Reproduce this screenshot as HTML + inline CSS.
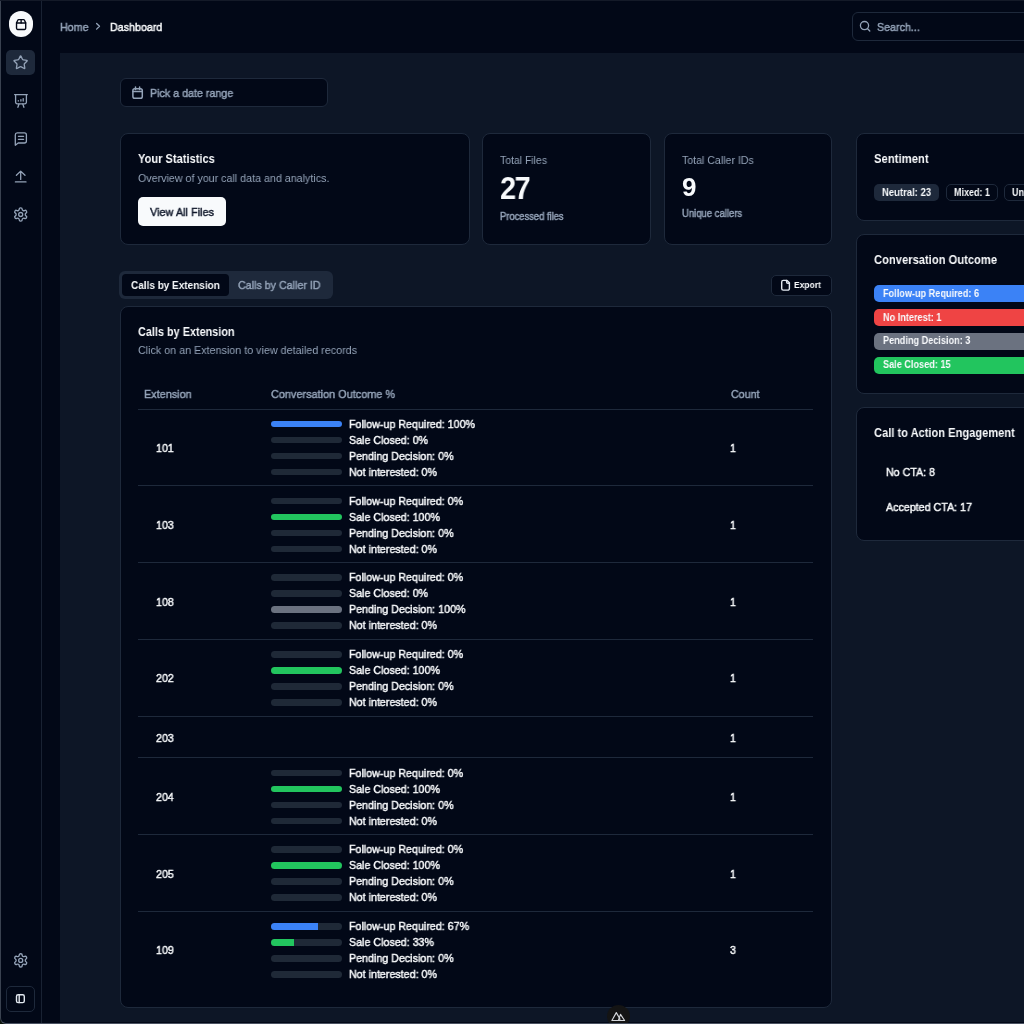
<!DOCTYPE html>
<html><head><meta charset="utf-8"><style>
html,body{margin:0;padding:0;width:1024px;height:1024px;overflow:hidden;background:#020817;}
body{position:relative;font-family:"Liberation Sans", sans-serif;}
.t{position:absolute;white-space:nowrap;will-change:transform;}
.r{position:absolute;}
svg{position:absolute;left:0;top:0;}
</style></head><body>
<div class="r" style="left:0px;top:0px;width:1024px;height:1024px;background:#020817;border-radius:0px;"></div>
<div class="r" style="left:42px;top:53px;width:982px;height:969px;background:#0d1626;border-radius:0px;"></div>
<div class="r" style="left:42px;top:53px;width:18px;height:969px;background:#020817;border-radius:0px;"></div>
<div class="r" style="left:41px;top:0px;width:1px;height:1024px;background:#192233;border-radius:0px;"></div>
<div class="r" style="left:0px;top:0px;width:1px;height:1024px;background:#3a4250;border-radius:0px;"></div>
<div class="r" style="left:0px;top:0px;width:1024px;height:1px;background:#141a28;border-radius:0px;"></div>
<div class="r" style="left:8.8px;top:11.4px;width:24.2px;height:25.6px;background:#f8fafc;border-radius:13px;"></div>
<div class="r" style="left:6px;top:50px;width:29px;height:25px;background:#1e293b;border-radius:5px;"></div>
<div class="r" style="left:6px;top:986px;width:29px;height:26px;background:transparent;border:1px solid #1e293b;box-sizing:border-box;border-radius:5px;"></div>
<div class="t" style="left:59.50px;top:20.54px;font-size:11.56px;line-height:12.91px;color:#94a3b8;font-weight:400;letter-spacing:0.00px;-webkit-text-stroke:0.45px #94a3b8;transform:scaleX(0.9259);transform-origin:0 0;">Home</div>
<div class="t" style="left:110.00px;top:20.54px;font-size:11.56px;line-height:12.91px;color:#f8fafc;font-weight:400;letter-spacing:0.00px;-webkit-text-stroke:0.45px #f8fafc;transform:scaleX(0.9259);transform-origin:0 0;">Dashboard</div>
<div class="r" style="left:852px;top:12px;width:200px;height:29px;background:#020817;border:1px solid #1e293b;box-sizing:border-box;border-radius:6px;"></div>
<div class="t" style="left:876.80px;top:20.54px;font-size:11.56px;line-height:12.91px;color:#94a3b8;font-weight:400;letter-spacing:0.00px;-webkit-text-stroke:0.45px #94a3b8;transform:scaleX(0.9259);transform-origin:0 0;">Search...</div>
<div class="r" style="left:119.5px;top:78px;width:208px;height:28.5px;background:#020817;border:1px solid #1e293b;box-sizing:border-box;border-radius:6px;"></div>
<div class="t" style="left:149.80px;top:87.34px;font-size:11.56px;line-height:12.91px;color:#94a3b8;font-weight:400;letter-spacing:0.00px;-webkit-text-stroke:0.45px #94a3b8;transform:scaleX(0.9259);transform-origin:0 0;">Pick a date range</div>
<div class="r" style="left:119.5px;top:132.5px;width:350px;height:112.5px;background:#020817;border:1px solid #1e293b;box-sizing:border-box;border-radius:8px;"></div>
<div class="t" style="left:138.00px;top:151.75px;font-size:12.65px;line-height:14.13px;color:#f8fafc;font-weight:700;letter-spacing:0.00px;transform:scaleX(0.8772);transform-origin:0 0;">Your Statistics</div>
<div class="t" style="left:138.00px;top:171.64px;font-size:11.56px;line-height:12.91px;color:#94a3b8;font-weight:400;letter-spacing:0.00px;transform:scaleX(0.9259);transform-origin:0 0;">Overview of your call data and analytics.</div>
<div class="r" style="left:137.5px;top:197px;width:88px;height:28.5px;background:#f8fafc;border-radius:5px;"></div>
<div class="t" style="left:150.00px;top:204.95px;font-size:11.77px;line-height:13.15px;color:#0f172a;font-weight:400;letter-spacing:0.00px;-webkit-text-stroke:0.45px #0f172a;transform:scaleX(0.9259);transform-origin:0 0;">View All Files</div>
<div class="r" style="left:481.5px;top:132.5px;width:169px;height:112.5px;background:#020817;border:1px solid #1e293b;box-sizing:border-box;border-radius:8px;"></div>
<div class="t" style="left:500.40px;top:153.89px;font-size:11.29px;line-height:12.61px;color:#94a3b8;font-weight:400;letter-spacing:0.00px;transform:scaleX(0.9259);transform-origin:0 0;">Total Files</div>
<div class="t" style="left:500.40px;top:171.03px;font-size:31.90px;line-height:35.63px;color:#f8fafc;font-weight:700;letter-spacing:-1.76px;transform:scaleX(0.9091);transform-origin:0 0;">27</div>
<div class="t" style="left:500.40px;top:211.11px;font-size:10.15px;line-height:11.34px;color:#94a3b8;font-weight:400;letter-spacing:0.00px;-webkit-text-stroke:0.45px #94a3b8;transform:scaleX(0.9259);transform-origin:0 0;">Processed files</div>
<div class="r" style="left:663.5px;top:132.5px;width:168px;height:112.5px;background:#020817;border:1px solid #1e293b;box-sizing:border-box;border-radius:8px;"></div>
<div class="t" style="left:681.50px;top:153.74px;font-size:11.45px;line-height:12.79px;color:#94a3b8;font-weight:400;letter-spacing:0.00px;transform:scaleX(0.9259);transform-origin:0 0;">Total Caller IDs</div>
<div class="t" style="left:681.50px;top:172.57px;font-size:26.00px;line-height:29.04px;color:#f8fafc;font-weight:700;letter-spacing:0.00px;">9</div>
<div class="t" style="left:681.50px;top:208.21px;font-size:10.26px;line-height:11.46px;color:#94a3b8;font-weight:400;letter-spacing:0.00px;-webkit-text-stroke:0.45px #94a3b8;transform:scaleX(0.9259);transform-origin:0 0;">Unique callers</div>
<div class="r" style="left:855.5px;top:132.5px;width:200px;height:88px;background:#020817;border:1px solid #1e293b;box-sizing:border-box;border-radius:8px;"></div>
<div class="t" style="left:874.30px;top:151.54px;font-size:12.88px;line-height:14.39px;color:#f8fafc;font-weight:700;letter-spacing:0.00px;transform:scaleX(0.8772);transform-origin:0 0;">Sentiment</div>
<div class="r" style="left:874px;top:184px;width:65px;height:16.5px;background:#1e293b;border-radius:5px;"></div>
<div class="t" style="left:882.30px;top:186.20px;font-size:10.83px;line-height:12.10px;color:#f8fafc;font-weight:700;letter-spacing:0.00px;transform:scaleX(0.8772);transform-origin:0 0;">Neutral: 23</div>
<div class="r" style="left:945.5px;top:184px;width:52px;height:16.5px;background:transparent;border:1px solid #1e293b;box-sizing:border-box;border-radius:5px;"></div>
<div class="t" style="left:953.70px;top:186.71px;font-size:10.26px;line-height:11.46px;color:#f8fafc;font-weight:700;letter-spacing:0.00px;transform:scaleX(0.8772);transform-origin:0 0;">Mixed: 1</div>
<div class="r" style="left:1003.8px;top:184px;width:60px;height:16.5px;background:transparent;border:1px solid #1e293b;box-sizing:border-box;border-radius:5px;"></div>
<div class="t" style="left:1011.50px;top:186.71px;font-size:10.26px;line-height:11.46px;color:#f8fafc;font-weight:700;letter-spacing:0.00px;transform:scaleX(0.8772);transform-origin:0 0;">Unknown: 1</div>
<div class="r" style="left:855.5px;top:233.5px;width:200px;height:160px;background:#020817;border:1px solid #1e293b;box-sizing:border-box;border-radius:8px;"></div>
<div class="t" style="left:874.40px;top:253.17px;font-size:12.75px;line-height:14.24px;color:#f8fafc;font-weight:700;letter-spacing:0.00px;transform:scaleX(0.8772);transform-origin:0 0;">Conversation Outcome</div>
<div class="r" style="left:874px;top:285.2px;width:170px;height:17px;background:#3b82f6;border-radius:5px;"></div>
<div class="t" style="left:882.50px;top:287.76px;font-size:10.43px;line-height:11.65px;color:#f8fafc;font-weight:700;letter-spacing:0.00px;transform:scaleX(0.8772);transform-origin:0 0;">Follow-up Required: 6</div>
<div class="r" style="left:874px;top:309.0px;width:170px;height:17px;background:#ef4444;border-radius:5px;"></div>
<div class="t" style="left:882.50px;top:311.56px;font-size:10.43px;line-height:11.65px;color:#f8fafc;font-weight:700;letter-spacing:0.00px;transform:scaleX(0.8772);transform-origin:0 0;">No Interest: 1</div>
<div class="r" style="left:874px;top:332.8px;width:170px;height:17px;background:#6b7280;border-radius:5px;"></div>
<div class="t" style="left:882.50px;top:335.36px;font-size:10.43px;line-height:11.65px;color:#f8fafc;font-weight:700;letter-spacing:0.00px;transform:scaleX(0.8772);transform-origin:0 0;">Pending Decision: 3</div>
<div class="r" style="left:874px;top:356.6px;width:170px;height:17px;background:#22c55e;border-radius:5px;"></div>
<div class="t" style="left:882.50px;top:359.16px;font-size:10.43px;line-height:11.65px;color:#f8fafc;font-weight:700;letter-spacing:0.00px;transform:scaleX(0.8772);transform-origin:0 0;">Sale Closed: 15</div>
<div class="r" style="left:855.5px;top:406.5px;width:200px;height:134px;background:#020817;border:1px solid #1e293b;box-sizing:border-box;border-radius:8px;"></div>
<div class="t" style="left:874.30px;top:425.55px;font-size:12.65px;line-height:14.13px;color:#f8fafc;font-weight:700;letter-spacing:0.00px;transform:scaleX(0.8772);transform-origin:0 0;">Call to Action Engagement</div>
<div class="t" style="left:886.00px;top:465.57px;font-size:11.52px;line-height:12.87px;color:#f8fafc;font-weight:400;letter-spacing:0.00px;-webkit-text-stroke:0.45px #f8fafc;transform:scaleX(0.9259);transform-origin:0 0;">No CTA: 8</div>
<div class="t" style="left:886.00px;top:500.84px;font-size:11.56px;line-height:12.91px;color:#f8fafc;font-weight:400;letter-spacing:0.00px;-webkit-text-stroke:0.45px #f8fafc;transform:scaleX(0.9259);transform-origin:0 0;">Accepted CTA: 17</div>
<div class="r" style="left:119px;top:270.5px;width:214px;height:28.5px;background:#1e293b;border-radius:6px;"></div>
<div class="r" style="left:122px;top:274px;width:107px;height:22px;background:#020817;border-radius:4px;"></div>
<div class="t" style="left:131.10px;top:278.98px;font-size:11.40px;line-height:12.73px;color:#f8fafc;font-weight:700;letter-spacing:0.00px;transform:scaleX(0.8772);transform-origin:0 0;">Calls by Extension</div>
<div class="t" style="left:238.40px;top:278.84px;font-size:11.56px;line-height:12.91px;color:#94a3b8;font-weight:400;letter-spacing:0.00px;-webkit-text-stroke:0.45px #94a3b8;transform:scaleX(0.9259);transform-origin:0 0;">Calls by Caller ID</div>
<div class="r" style="left:771px;top:274.5px;width:60.5px;height:21.5px;background:#020817;border:1px solid #1e293b;box-sizing:border-box;border-radius:5px;"></div>
<div class="t" style="left:793.75px;top:280.13px;font-size:9.69px;line-height:10.82px;color:#f8fafc;font-weight:700;letter-spacing:0.00px;transform:scaleX(0.8772);transform-origin:0 0;">Export</div>
<div class="r" style="left:119.5px;top:306px;width:712px;height:702px;background:#020817;border:1px solid #1e293b;box-sizing:border-box;border-radius:8px;"></div>
<div class="t" style="left:138.10px;top:326.30px;font-size:12.38px;line-height:13.83px;color:#f8fafc;font-weight:700;letter-spacing:0.00px;transform:scaleX(0.8772);transform-origin:0 0;">Calls by Extension</div>
<div class="t" style="left:138.10px;top:344.40px;font-size:11.60px;line-height:12.96px;color:#94a3b8;font-weight:400;letter-spacing:0.00px;transform:scaleX(0.9259);transform-origin:0 0;">Click on an Extension to view detailed records</div>
<div class="t" style="left:143.75px;top:387.39px;font-size:11.73px;line-height:13.10px;color:#94a3b8;font-weight:400;letter-spacing:0.00px;-webkit-text-stroke:0.45px #94a3b8;transform:scaleX(0.9259);transform-origin:0 0;">Extension</div>
<div class="t" style="left:271.00px;top:387.45px;font-size:11.77px;line-height:13.15px;color:#94a3b8;font-weight:400;letter-spacing:0.00px;-webkit-text-stroke:0.45px #94a3b8;transform:scaleX(0.9259);transform-origin:0 0;">Conversation Outcome %</div>
<div class="t" style="left:730.50px;top:387.64px;font-size:11.56px;line-height:12.91px;color:#94a3b8;font-weight:400;letter-spacing:0.00px;-webkit-text-stroke:0.45px #94a3b8;transform:scaleX(0.9259);transform-origin:0 0;">Count</div>
<div class="r" style="left:137.5px;top:408.5px;width:675.5px;height:1px;background:#1e293b;border-radius:0px;"></div>
<div class="t" style="left:155.50px;top:442.04px;font-size:11.56px;line-height:12.91px;color:#f8fafc;font-weight:400;letter-spacing:0.00px;-webkit-text-stroke:0.45px #f8fafc;transform:scaleX(0.9259);transform-origin:0 0;">101</div>
<div class="t" style="left:730.00px;top:442.04px;font-size:11.56px;line-height:12.91px;color:#f8fafc;font-weight:400;letter-spacing:0.00px;-webkit-text-stroke:0.45px #f8fafc;transform:scaleX(0.9259);transform-origin:0 0;">1</div>
<div class="r" style="left:270.5px;top:420.8px;width:71.5px;height:6.5px;background:#1f2937;border-radius:4px;overflow:hidden"><div style="width:100%;height:100%;background:#3b82f6"></div></div>
<div class="t" style="left:348.60px;top:417.84px;font-size:11.56px;line-height:12.91px;color:#f8fafc;font-weight:400;letter-spacing:0.00px;-webkit-text-stroke:0.45px #f8fafc;transform:scaleX(0.9259);transform-origin:0 0;">Follow-up Required: 100%</div>
<div class="r" style="left:270.5px;top:436.8px;width:71.5px;height:6.5px;background:#1f2937;border-radius:4px;overflow:hidden"></div>
<div class="t" style="left:348.60px;top:433.84px;font-size:11.56px;line-height:12.91px;color:#f8fafc;font-weight:400;letter-spacing:0.00px;-webkit-text-stroke:0.45px #f8fafc;transform:scaleX(0.9259);transform-origin:0 0;">Sale Closed: 0%</div>
<div class="r" style="left:270.5px;top:452.8px;width:71.5px;height:6.5px;background:#1f2937;border-radius:4px;overflow:hidden"></div>
<div class="t" style="left:348.60px;top:449.84px;font-size:11.56px;line-height:12.91px;color:#f8fafc;font-weight:400;letter-spacing:0.00px;-webkit-text-stroke:0.45px #f8fafc;transform:scaleX(0.9259);transform-origin:0 0;">Pending Decision: 0%</div>
<div class="r" style="left:270.5px;top:468.8px;width:71.5px;height:6.5px;background:#1f2937;border-radius:4px;overflow:hidden"></div>
<div class="t" style="left:348.60px;top:465.84px;font-size:11.56px;line-height:12.91px;color:#f8fafc;font-weight:400;letter-spacing:0.00px;-webkit-text-stroke:0.45px #f8fafc;transform:scaleX(0.9259);transform-origin:0 0;">Not interested: 0%</div>
<div class="r" style="left:137.5px;top:485.3px;width:675.5px;height:1px;background:#1e293b;border-radius:0px;"></div>
<div class="t" style="left:155.50px;top:518.84px;font-size:11.56px;line-height:12.91px;color:#f8fafc;font-weight:400;letter-spacing:0.00px;-webkit-text-stroke:0.45px #f8fafc;transform:scaleX(0.9259);transform-origin:0 0;">103</div>
<div class="t" style="left:730.00px;top:518.84px;font-size:11.56px;line-height:12.91px;color:#f8fafc;font-weight:400;letter-spacing:0.00px;-webkit-text-stroke:0.45px #f8fafc;transform:scaleX(0.9259);transform-origin:0 0;">1</div>
<div class="r" style="left:270.5px;top:497.6px;width:71.5px;height:6.5px;background:#1f2937;border-radius:4px;overflow:hidden"></div>
<div class="t" style="left:348.60px;top:494.64px;font-size:11.56px;line-height:12.91px;color:#f8fafc;font-weight:400;letter-spacing:0.00px;-webkit-text-stroke:0.45px #f8fafc;transform:scaleX(0.9259);transform-origin:0 0;">Follow-up Required: 0%</div>
<div class="r" style="left:270.5px;top:513.6px;width:71.5px;height:6.5px;background:#1f2937;border-radius:4px;overflow:hidden"><div style="width:100%;height:100%;background:#22c55e"></div></div>
<div class="t" style="left:348.60px;top:510.64px;font-size:11.56px;line-height:12.91px;color:#f8fafc;font-weight:400;letter-spacing:0.00px;-webkit-text-stroke:0.45px #f8fafc;transform:scaleX(0.9259);transform-origin:0 0;">Sale Closed: 100%</div>
<div class="r" style="left:270.5px;top:529.6px;width:71.5px;height:6.5px;background:#1f2937;border-radius:4px;overflow:hidden"></div>
<div class="t" style="left:348.60px;top:526.64px;font-size:11.56px;line-height:12.91px;color:#f8fafc;font-weight:400;letter-spacing:0.00px;-webkit-text-stroke:0.45px #f8fafc;transform:scaleX(0.9259);transform-origin:0 0;">Pending Decision: 0%</div>
<div class="r" style="left:270.5px;top:545.6px;width:71.5px;height:6.5px;background:#1f2937;border-radius:4px;overflow:hidden"></div>
<div class="t" style="left:348.60px;top:542.64px;font-size:11.56px;line-height:12.91px;color:#f8fafc;font-weight:400;letter-spacing:0.00px;-webkit-text-stroke:0.45px #f8fafc;transform:scaleX(0.9259);transform-origin:0 0;">Not interested: 0%</div>
<div class="r" style="left:137.5px;top:562.1px;width:675.5px;height:1px;background:#1e293b;border-radius:0px;"></div>
<div class="t" style="left:155.50px;top:595.64px;font-size:11.56px;line-height:12.91px;color:#f8fafc;font-weight:400;letter-spacing:0.00px;-webkit-text-stroke:0.45px #f8fafc;transform:scaleX(0.9259);transform-origin:0 0;">108</div>
<div class="t" style="left:730.00px;top:595.64px;font-size:11.56px;line-height:12.91px;color:#f8fafc;font-weight:400;letter-spacing:0.00px;-webkit-text-stroke:0.45px #f8fafc;transform:scaleX(0.9259);transform-origin:0 0;">1</div>
<div class="r" style="left:270.5px;top:574.4px;width:71.5px;height:6.5px;background:#1f2937;border-radius:4px;overflow:hidden"></div>
<div class="t" style="left:348.60px;top:571.44px;font-size:11.56px;line-height:12.91px;color:#f8fafc;font-weight:400;letter-spacing:0.00px;-webkit-text-stroke:0.45px #f8fafc;transform:scaleX(0.9259);transform-origin:0 0;">Follow-up Required: 0%</div>
<div class="r" style="left:270.5px;top:590.4px;width:71.5px;height:6.5px;background:#1f2937;border-radius:4px;overflow:hidden"></div>
<div class="t" style="left:348.60px;top:587.44px;font-size:11.56px;line-height:12.91px;color:#f8fafc;font-weight:400;letter-spacing:0.00px;-webkit-text-stroke:0.45px #f8fafc;transform:scaleX(0.9259);transform-origin:0 0;">Sale Closed: 0%</div>
<div class="r" style="left:270.5px;top:606.4px;width:71.5px;height:6.5px;background:#1f2937;border-radius:4px;overflow:hidden"><div style="width:100%;height:100%;background:#6b7280"></div></div>
<div class="t" style="left:348.60px;top:603.44px;font-size:11.56px;line-height:12.91px;color:#f8fafc;font-weight:400;letter-spacing:0.00px;-webkit-text-stroke:0.45px #f8fafc;transform:scaleX(0.9259);transform-origin:0 0;">Pending Decision: 100%</div>
<div class="r" style="left:270.5px;top:622.4px;width:71.5px;height:6.5px;background:#1f2937;border-radius:4px;overflow:hidden"></div>
<div class="t" style="left:348.60px;top:619.44px;font-size:11.56px;line-height:12.91px;color:#f8fafc;font-weight:400;letter-spacing:0.00px;-webkit-text-stroke:0.45px #f8fafc;transform:scaleX(0.9259);transform-origin:0 0;">Not interested: 0%</div>
<div class="r" style="left:137.5px;top:638.9px;width:675.5px;height:1px;background:#1e293b;border-radius:0px;"></div>
<div class="t" style="left:155.50px;top:672.44px;font-size:11.56px;line-height:12.91px;color:#f8fafc;font-weight:400;letter-spacing:0.00px;-webkit-text-stroke:0.45px #f8fafc;transform:scaleX(0.9259);transform-origin:0 0;">202</div>
<div class="t" style="left:730.00px;top:672.44px;font-size:11.56px;line-height:12.91px;color:#f8fafc;font-weight:400;letter-spacing:0.00px;-webkit-text-stroke:0.45px #f8fafc;transform:scaleX(0.9259);transform-origin:0 0;">1</div>
<div class="r" style="left:270.5px;top:651.2px;width:71.5px;height:6.5px;background:#1f2937;border-radius:4px;overflow:hidden"></div>
<div class="t" style="left:348.60px;top:648.24px;font-size:11.56px;line-height:12.91px;color:#f8fafc;font-weight:400;letter-spacing:0.00px;-webkit-text-stroke:0.45px #f8fafc;transform:scaleX(0.9259);transform-origin:0 0;">Follow-up Required: 0%</div>
<div class="r" style="left:270.5px;top:667.2px;width:71.5px;height:6.5px;background:#1f2937;border-radius:4px;overflow:hidden"><div style="width:100%;height:100%;background:#22c55e"></div></div>
<div class="t" style="left:348.60px;top:664.24px;font-size:11.56px;line-height:12.91px;color:#f8fafc;font-weight:400;letter-spacing:0.00px;-webkit-text-stroke:0.45px #f8fafc;transform:scaleX(0.9259);transform-origin:0 0;">Sale Closed: 100%</div>
<div class="r" style="left:270.5px;top:683.2px;width:71.5px;height:6.5px;background:#1f2937;border-radius:4px;overflow:hidden"></div>
<div class="t" style="left:348.60px;top:680.24px;font-size:11.56px;line-height:12.91px;color:#f8fafc;font-weight:400;letter-spacing:0.00px;-webkit-text-stroke:0.45px #f8fafc;transform:scaleX(0.9259);transform-origin:0 0;">Pending Decision: 0%</div>
<div class="r" style="left:270.5px;top:699.2px;width:71.5px;height:6.5px;background:#1f2937;border-radius:4px;overflow:hidden"></div>
<div class="t" style="left:348.60px;top:696.24px;font-size:11.56px;line-height:12.91px;color:#f8fafc;font-weight:400;letter-spacing:0.00px;-webkit-text-stroke:0.45px #f8fafc;transform:scaleX(0.9259);transform-origin:0 0;">Not interested: 0%</div>
<div class="r" style="left:137.5px;top:715.7px;width:675.5px;height:1px;background:#1e293b;border-radius:0px;"></div>
<div class="t" style="left:155.50px;top:731.64px;font-size:11.56px;line-height:12.91px;color:#f8fafc;font-weight:400;letter-spacing:0.00px;-webkit-text-stroke:0.45px #f8fafc;transform:scaleX(0.9259);transform-origin:0 0;">203</div>
<div class="t" style="left:730.00px;top:731.64px;font-size:11.56px;line-height:12.91px;color:#f8fafc;font-weight:400;letter-spacing:0.00px;-webkit-text-stroke:0.45px #f8fafc;transform:scaleX(0.9259);transform-origin:0 0;">1</div>
<div class="r" style="left:137.5px;top:757.3px;width:675.5px;height:1px;background:#1e293b;border-radius:0px;"></div>
<div class="t" style="left:155.50px;top:790.84px;font-size:11.56px;line-height:12.91px;color:#f8fafc;font-weight:400;letter-spacing:0.00px;-webkit-text-stroke:0.45px #f8fafc;transform:scaleX(0.9259);transform-origin:0 0;">204</div>
<div class="t" style="left:730.00px;top:790.84px;font-size:11.56px;line-height:12.91px;color:#f8fafc;font-weight:400;letter-spacing:0.00px;-webkit-text-stroke:0.45px #f8fafc;transform:scaleX(0.9259);transform-origin:0 0;">1</div>
<div class="r" style="left:270.5px;top:769.6px;width:71.5px;height:6.5px;background:#1f2937;border-radius:4px;overflow:hidden"></div>
<div class="t" style="left:348.60px;top:766.64px;font-size:11.56px;line-height:12.91px;color:#f8fafc;font-weight:400;letter-spacing:0.00px;-webkit-text-stroke:0.45px #f8fafc;transform:scaleX(0.9259);transform-origin:0 0;">Follow-up Required: 0%</div>
<div class="r" style="left:270.5px;top:785.6px;width:71.5px;height:6.5px;background:#1f2937;border-radius:4px;overflow:hidden"><div style="width:100%;height:100%;background:#22c55e"></div></div>
<div class="t" style="left:348.60px;top:782.64px;font-size:11.56px;line-height:12.91px;color:#f8fafc;font-weight:400;letter-spacing:0.00px;-webkit-text-stroke:0.45px #f8fafc;transform:scaleX(0.9259);transform-origin:0 0;">Sale Closed: 100%</div>
<div class="r" style="left:270.5px;top:801.6px;width:71.5px;height:6.5px;background:#1f2937;border-radius:4px;overflow:hidden"></div>
<div class="t" style="left:348.60px;top:798.64px;font-size:11.56px;line-height:12.91px;color:#f8fafc;font-weight:400;letter-spacing:0.00px;-webkit-text-stroke:0.45px #f8fafc;transform:scaleX(0.9259);transform-origin:0 0;">Pending Decision: 0%</div>
<div class="r" style="left:270.5px;top:817.6px;width:71.5px;height:6.5px;background:#1f2937;border-radius:4px;overflow:hidden"></div>
<div class="t" style="left:348.60px;top:814.64px;font-size:11.56px;line-height:12.91px;color:#f8fafc;font-weight:400;letter-spacing:0.00px;-webkit-text-stroke:0.45px #f8fafc;transform:scaleX(0.9259);transform-origin:0 0;">Not interested: 0%</div>
<div class="r" style="left:137.5px;top:834.1px;width:675.5px;height:1px;background:#1e293b;border-radius:0px;"></div>
<div class="t" style="left:155.50px;top:867.64px;font-size:11.56px;line-height:12.91px;color:#f8fafc;font-weight:400;letter-spacing:0.00px;-webkit-text-stroke:0.45px #f8fafc;transform:scaleX(0.9259);transform-origin:0 0;">205</div>
<div class="t" style="left:730.00px;top:867.64px;font-size:11.56px;line-height:12.91px;color:#f8fafc;font-weight:400;letter-spacing:0.00px;-webkit-text-stroke:0.45px #f8fafc;transform:scaleX(0.9259);transform-origin:0 0;">1</div>
<div class="r" style="left:270.5px;top:846.4px;width:71.5px;height:6.5px;background:#1f2937;border-radius:4px;overflow:hidden"></div>
<div class="t" style="left:348.60px;top:843.44px;font-size:11.56px;line-height:12.91px;color:#f8fafc;font-weight:400;letter-spacing:0.00px;-webkit-text-stroke:0.45px #f8fafc;transform:scaleX(0.9259);transform-origin:0 0;">Follow-up Required: 0%</div>
<div class="r" style="left:270.5px;top:862.4px;width:71.5px;height:6.5px;background:#1f2937;border-radius:4px;overflow:hidden"><div style="width:100%;height:100%;background:#22c55e"></div></div>
<div class="t" style="left:348.60px;top:859.44px;font-size:11.56px;line-height:12.91px;color:#f8fafc;font-weight:400;letter-spacing:0.00px;-webkit-text-stroke:0.45px #f8fafc;transform:scaleX(0.9259);transform-origin:0 0;">Sale Closed: 100%</div>
<div class="r" style="left:270.5px;top:878.4px;width:71.5px;height:6.5px;background:#1f2937;border-radius:4px;overflow:hidden"></div>
<div class="t" style="left:348.60px;top:875.44px;font-size:11.56px;line-height:12.91px;color:#f8fafc;font-weight:400;letter-spacing:0.00px;-webkit-text-stroke:0.45px #f8fafc;transform:scaleX(0.9259);transform-origin:0 0;">Pending Decision: 0%</div>
<div class="r" style="left:270.5px;top:894.4px;width:71.5px;height:6.5px;background:#1f2937;border-radius:4px;overflow:hidden"></div>
<div class="t" style="left:348.60px;top:891.44px;font-size:11.56px;line-height:12.91px;color:#f8fafc;font-weight:400;letter-spacing:0.00px;-webkit-text-stroke:0.45px #f8fafc;transform:scaleX(0.9259);transform-origin:0 0;">Not interested: 0%</div>
<div class="r" style="left:137.5px;top:910.9px;width:675.5px;height:1px;background:#1e293b;border-radius:0px;"></div>
<div class="t" style="left:155.50px;top:944.44px;font-size:11.56px;line-height:12.91px;color:#f8fafc;font-weight:400;letter-spacing:0.00px;-webkit-text-stroke:0.45px #f8fafc;transform:scaleX(0.9259);transform-origin:0 0;">109</div>
<div class="t" style="left:730.00px;top:944.44px;font-size:11.56px;line-height:12.91px;color:#f8fafc;font-weight:400;letter-spacing:0.00px;-webkit-text-stroke:0.45px #f8fafc;transform:scaleX(0.9259);transform-origin:0 0;">3</div>
<div class="r" style="left:270.5px;top:923.2px;width:71.5px;height:6.5px;background:#1f2937;border-radius:4px;overflow:hidden"><div style="width:67%;height:100%;background:#3b82f6"></div></div>
<div class="t" style="left:348.60px;top:920.24px;font-size:11.56px;line-height:12.91px;color:#f8fafc;font-weight:400;letter-spacing:0.00px;-webkit-text-stroke:0.45px #f8fafc;transform:scaleX(0.9259);transform-origin:0 0;">Follow-up Required: 67%</div>
<div class="r" style="left:270.5px;top:939.2px;width:71.5px;height:6.5px;background:#1f2937;border-radius:4px;overflow:hidden"><div style="width:33%;height:100%;background:#22c55e"></div></div>
<div class="t" style="left:348.60px;top:936.24px;font-size:11.56px;line-height:12.91px;color:#f8fafc;font-weight:400;letter-spacing:0.00px;-webkit-text-stroke:0.45px #f8fafc;transform:scaleX(0.9259);transform-origin:0 0;">Sale Closed: 33%</div>
<div class="r" style="left:270.5px;top:955.2px;width:71.5px;height:6.5px;background:#1f2937;border-radius:4px;overflow:hidden"></div>
<div class="t" style="left:348.60px;top:952.24px;font-size:11.56px;line-height:12.91px;color:#f8fafc;font-weight:400;letter-spacing:0.00px;-webkit-text-stroke:0.45px #f8fafc;transform:scaleX(0.9259);transform-origin:0 0;">Pending Decision: 0%</div>
<div class="r" style="left:270.5px;top:971.2px;width:71.5px;height:6.5px;background:#1f2937;border-radius:4px;overflow:hidden"></div>
<div class="t" style="left:348.60px;top:968.24px;font-size:11.56px;line-height:12.91px;color:#f8fafc;font-weight:400;letter-spacing:0.00px;-webkit-text-stroke:0.45px #f8fafc;transform:scaleX(0.9259);transform-origin:0 0;">Not interested: 0%</div>
<div class="r" style="left:606.5px;top:1005.3px;width:23.2px;height:23.2px;background:#141414;border-radius:12px;"></div>
<svg width="1024" height="1024" viewBox="0 0 1024 1024" fill="none" stroke-linecap="round" stroke-linejoin="round">
<!-- logo package -->
<g transform="translate(15.0,18.0) scale(0.51,0.545)" stroke="#020817" stroke-width="2.7">
<path d="M3 9h18v10a2 2 0 0 1-2 2H5a2 2 0 0 1-2-2V9Z"/><path d="m3 9 2.45-4.9A2 2 0 0 1 7.24 3h9.52a2 2 0 0 1 1.8 1.1L21 9"/><path d="M12 3v6"/>
</g>
<!-- star -->
<g transform="translate(12.68,54.6) scale(0.66)" stroke="#94a3b8" stroke-width="2">
<path d="M11.525 2.295a.53.53 0 0 1 .95 0l2.31 4.679a2.123 2.123 0 0 0 1.595 1.16l5.166.756a.53.53 0 0 1 .294.904l-3.736 3.638a2.123 2.123 0 0 0-.611 1.878l.882 5.14a.53.53 0 0 1-.771.56l-4.618-2.428a2.122 2.122 0 0 0-1.973 0L6.396 21.01a.53.53 0 0 1-.77-.56l.881-5.139a2.122 2.122 0 0 0-.611-1.879L2.16 9.795a.53.53 0 0 1 .294-.906l5.165-.755a2.122 2.122 0 0 0 1.597-1.16z"/>
</g>
<g stroke="#94a3b8" stroke-width="1.3">
<!-- presentation -->
<path d="M14.6 94.6H27.3"/>
<path d="M15.6 94.6V102.2a1.6 1.6 0 0 0 1.6 1.6H24.8a1.6 1.6 0 0 0 1.6-1.6V94.6"/>
<path d="M19 104L17.9 107.3M22.8 104L23.9 107.3"/>
<path d="M18.3 100.6V101M20.9 99.6V101M23.2 98.6V101"/>
<!-- message -->
<path d="M17.2 132.9H24.4a2 2 0 0 1 2 2V141a2 2 0 0 1-2 2H18.2L15.3 145.2V134.9a2 2 0 0 1 1.9-2Z"/>
<path d="M18.4 136.3H23.6M18.4 139.3H23.6"/>
<!-- upload -->
<path d="M16.4 175.3L20.7 171.1L25 175.3M20.7 171.2V179.4M15.4 181.9H26"/>
<!-- chevron breadcrumb -->
<path d="M96.6 23.5L99.5 26.3L96.6 29.1"/>
<!-- search -->
<circle cx="864.5" cy="25.6" r="4.1"/><path d="M867.6 28.8L869.8 31"/>
<!-- calendar -->
<rect x="132.9" y="88.7" width="9.4" height="9.6" rx="1.8" stroke-width="1.5"/>
<path d="M135.5 86.9V89.6M139.6 86.9V89.6M132.9 91.6H142.3" stroke-width="1.5"/>
</g>
<!-- settings top -->
<g transform="translate(12.72,206.5) scale(0.665)" stroke="#94a3b8" stroke-width="2">
<path d="M12.22 2h-.44a2 2 0 0 0-2 2v.18a2 2 0 0 1-1 1.73l-.43.25a2 2 0 0 1-2 0l-.15-.08a2 2 0 0 0-2.73.73l-.22.38a2 2 0 0 0 .73 2.73l.15.1a2 2 0 0 1 1 1.72v.51a2 2 0 0 1-1 1.74l-.15.09a2 2 0 0 0-.73 2.73l.22.38a2 2 0 0 0 2.73.73l.15-.08a2 2 0 0 1 2 0l.43.25a2 2 0 0 1 1 1.73V20a2 2 0 0 0 2 2h.44a2 2 0 0 0 2-2v-.18a2 2 0 0 1 1-1.73l.43-.25a2 2 0 0 1 2 0l.15.08a2 2 0 0 0 2.73-.73l.22-.39a2 2 0 0 0-.73-2.73l-.15-.08a2 2 0 0 1-1-1.74v-.5a2 2 0 0 1 1-1.74l.15-.09a2 2 0 0 0 .73-2.73l-.22-.38a2 2 0 0 0-2.73-.73l-.15.08a2 2 0 0 1-2 0l-.43-.25a2 2 0 0 1-1-1.73V4a2 2 0 0 0-2-2z"/><circle cx="12" cy="12" r="3"/>
</g>
<g transform="translate(12.72,952.4) scale(0.665)" stroke="#94a3b8" stroke-width="2">
<path d="M12.22 2h-.44a2 2 0 0 0-2 2v.18a2 2 0 0 1-1 1.73l-.43.25a2 2 0 0 1-2 0l-.15-.08a2 2 0 0 0-2.73.73l-.22.38a2 2 0 0 0 .73 2.73l.15.1a2 2 0 0 1 1 1.72v.51a2 2 0 0 1-1 1.74l-.15.09a2 2 0 0 0-.73 2.73l.22.38a2 2 0 0 0 2.73.73l.15-.08a2 2 0 0 1 2 0l.43.25a2 2 0 0 1 1 1.73V20a2 2 0 0 0 2 2h.44a2 2 0 0 0 2-2v-.18a2 2 0 0 1 1-1.73l.43-.25a2 2 0 0 1 2 0l.15.08a2 2 0 0 0 2.73-.73l.22-.39a2 2 0 0 0-.73-2.73l-.15-.08a2 2 0 0 1-1-1.74v-.5a2 2 0 0 1 1-1.74l.15-.09a2 2 0 0 0 .73-2.73l-.22-.38a2 2 0 0 0-2.73-.73l-.15.08a2 2 0 0 1-2 0l-.43-.25a2 2 0 0 1-1-1.73V4a2 2 0 0 0-2-2z"/><circle cx="12" cy="12" r="3"/>
</g>
<!-- panel toggle -->
<g stroke="#e2e8f0" stroke-width="1.4">
<rect x="16.5" y="994.8" width="7.8" height="7.8" rx="1.6"/><path d="M19.2 994.8V1002.6"/>
</g>
<!-- file export -->
<g stroke="#e2e8f0" stroke-width="1.4">
<path d="M787 280.4H783.3a1.6 1.6 0 0 0-1.6 1.6V288.5a1.6 1.6 0 0 0 1.6 1.6H787.8a1.6 1.6 0 0 0 1.6-1.6V282.8Z"/><path d="M786.6 280.4V282a1.2 1.2 0 0 0 1.2 1.2H789.4"/>
</g>
<!-- nuxt -->
<g stroke="#d4d6da" stroke-width="1.15">
<path d="M611.9 1020.5L616.3 1012.6L619.7 1018.4Q620.3 1020.5 618.4 1020.5Z"/>
<path d="M618.4 1020.5L620.5 1014.4L624.6 1020.5Z"/>
</g>
</svg>
<div class="r" style="left:0px;top:1023px;width:1024px;height:1px;background:#4a5262;border-radius:0px;"></div>
<div class="r" style="left:0;top:1013px;width:6px;height:11px;background:#0b140c"></div>
<div class="r" style="left:0;top:1013px;width:6px;height:11px;box-sizing:border-box;background:#020817;border-left:1px solid #3a4250;border-bottom:1px solid #4a5262;border-bottom-left-radius:6px"></div>
</body></html>
